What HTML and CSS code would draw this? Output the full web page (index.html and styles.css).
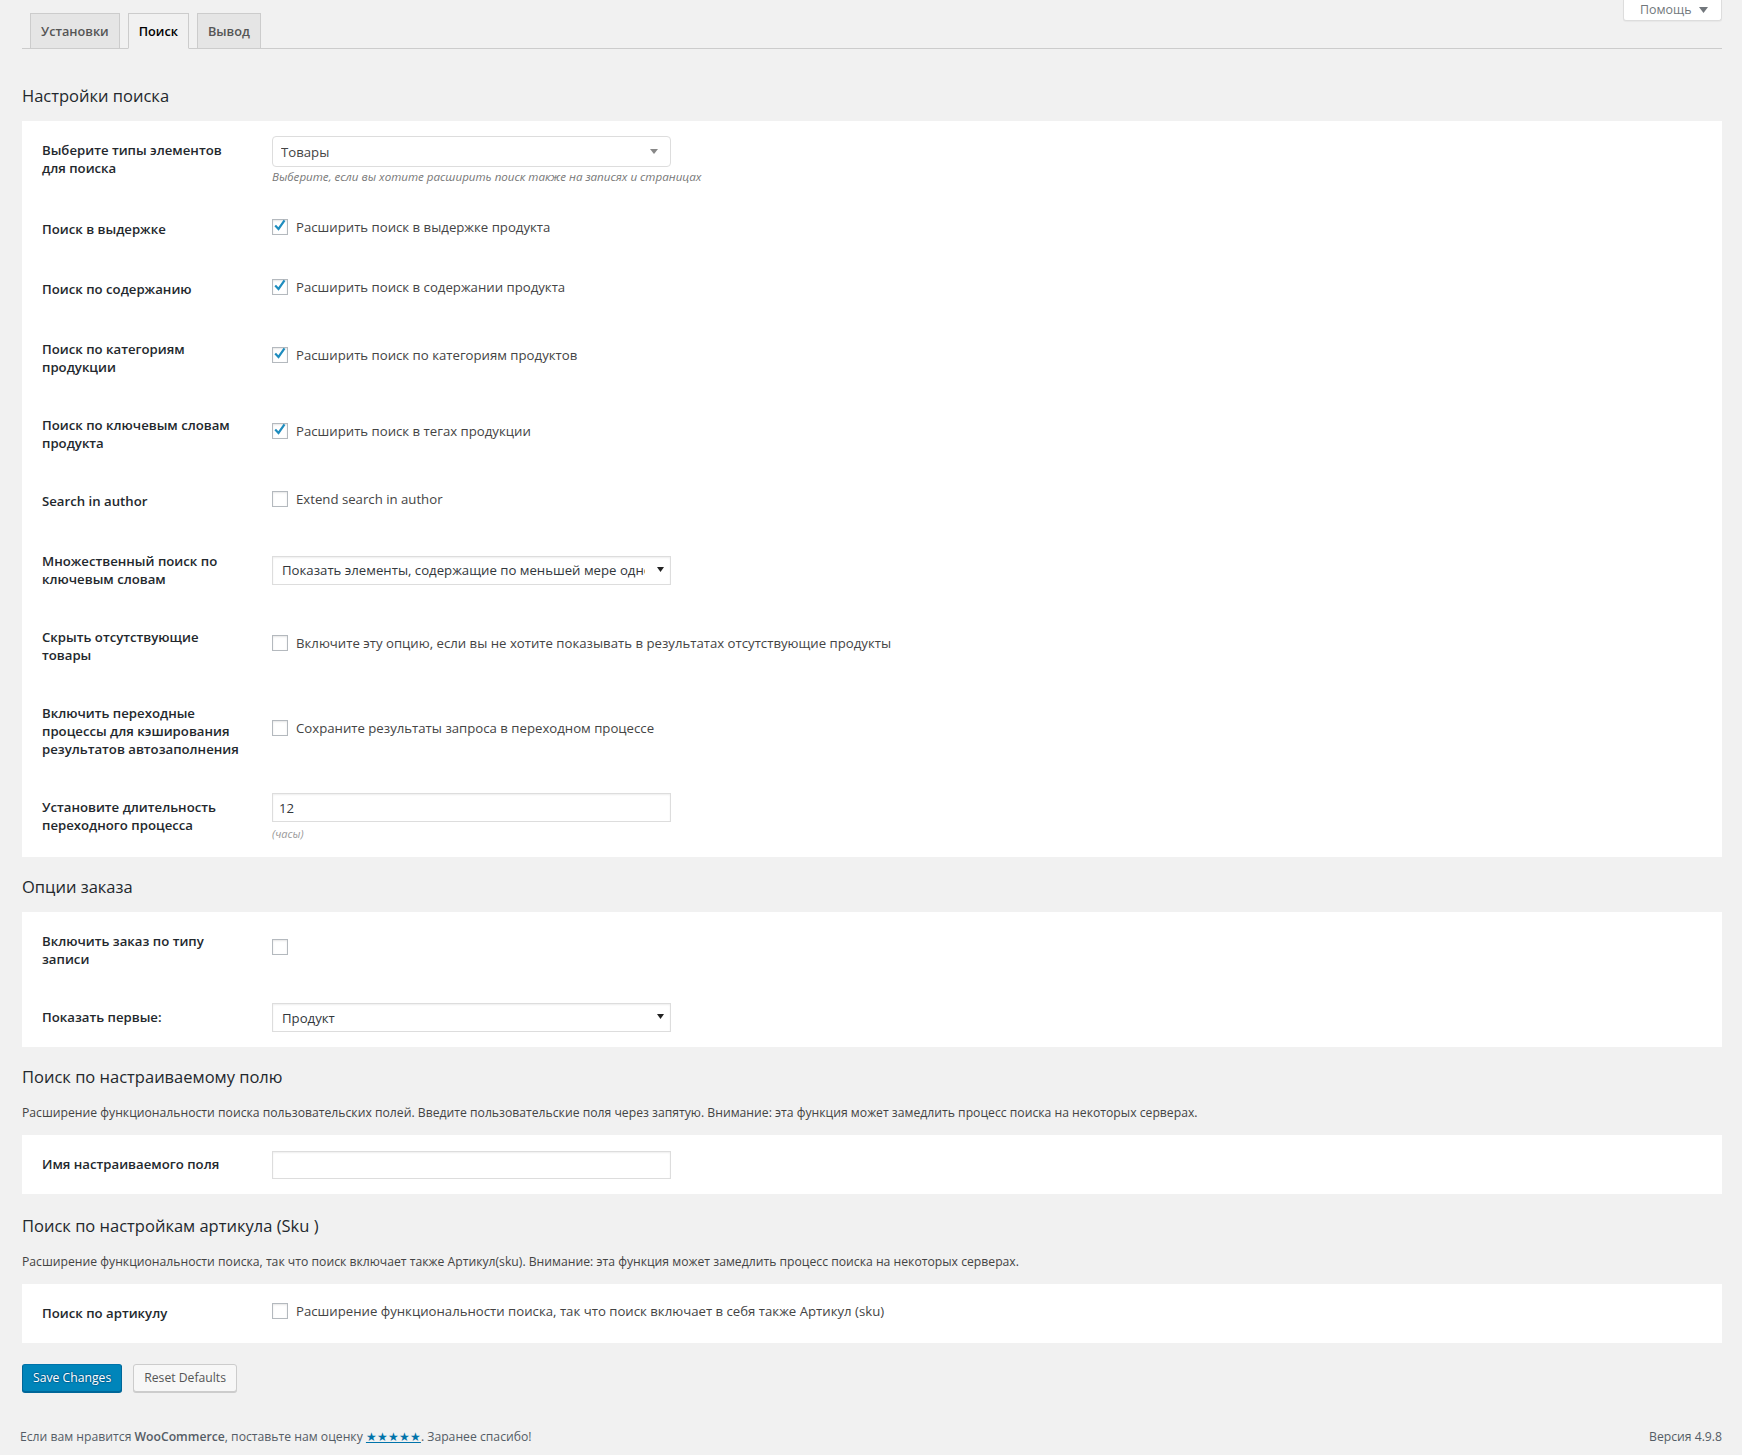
FILE: index.html
```html
<!DOCTYPE html>
<html lang="ru">
<head>
<meta charset="utf-8">
<title>Настройки поиска</title>
<link rel="stylesheet" href="styles.css">
</head>
<body>
<div class="wrap">
  <a class="help">Помощь <svg class="help-arrow" width="9" height="6" viewBox="0 0 9 6"><path d="M0 0h9L4.5 6z" fill="#72777c"/></svg></a>
  <nav class="tabs">
    <a class="tab">Установки</a>
    <a class="tab active">Поиск</a>
    <a class="tab">Вывод</a>
  </nav>

  <h2 class="section-title">Настройки поиска</h2>
  <div class="panel">
    <div class="row">
      <div class="th">Выберите типы элементов для поиска</div>
      <div class="td td-top">
        <div class="select2"><span class="sel-text">Товары</span><span class="s2-arrow"></span></div>
        <p class="desc">Выберите, если вы хотите расширить поиск также на записях и страницах</p>
      </div>
    </div>
    <div class="row">
      <div class="th">Поиск в выдержке</div>
      <div class="td td-check"><label class="check"><span class="cb"><svg viewBox="0 0 16 16" width="16" height="16"><path d="M3.2 7.6l3.3 3.4 6-8.6" fill="none" stroke="#1e8cbe" stroke-width="2.2"/></svg></span>Расширить поиск в выдержке продукта</label></div>
    </div>
    <div class="row">
      <div class="th">Поиск по содержанию</div>
      <div class="td td-check"><label class="check"><span class="cb"><svg viewBox="0 0 16 16" width="16" height="16"><path d="M3.2 7.6l3.3 3.4 6-8.6" fill="none" stroke="#1e8cbe" stroke-width="2.2"/></svg></span>Расширить поиск в содержании продукта</label></div>
    </div>
    <div class="row">
      <div class="th">Поиск по категориям продукции</div>
      <div class="td td-check"><label class="check"><span class="cb"><svg viewBox="0 0 16 16" width="16" height="16"><path d="M3.2 7.6l3.3 3.4 6-8.6" fill="none" stroke="#1e8cbe" stroke-width="2.2"/></svg></span>Расширить поиск по категориям продуктов</label></div>
    </div>
    <div class="row">
      <div class="th">Поиск по ключевым словам продукта</div>
      <div class="td td-check"><label class="check"><span class="cb"><svg viewBox="0 0 16 16" width="16" height="16"><path d="M3.2 7.6l3.3 3.4 6-8.6" fill="none" stroke="#1e8cbe" stroke-width="2.2"/></svg></span>Расширить поиск в тегах продукции</label></div>
    </div>
    <div class="row">
      <div class="th">Search in author</div>
      <div class="td td-check"><label class="check"><span class="cb"></span>Extend search in author</label></div>
    </div>
    <div class="row">
      <div class="th">Множественный поиск по ключевым словам</div>
      <div class="td">
        <div class="select"><span class="sel-text">Показать элементы, содержащие по меньшей мере одно ключевое слово</span><svg class="sel-arrow" width="7" height="5" viewBox="0 0 7 5"><path d="M0 0h7L3.5 5z" fill="#222"/></svg></div>
      </div>
    </div>
    <div class="row">
      <div class="th">Скрыть отсутствующие товары</div>
      <div class="td td-check"><label class="check"><span class="cb"></span>Включите эту опцию, если вы не хотите показывать в результатах отсутствующие продукты</label></div>
    </div>
    <div class="row">
      <div class="th">Включить переходные процессы для кэширования результатов автозаполнения</div>
      <div class="td td-check"><label class="check"><span class="cb"></span>Сохраните результаты запроса в переходном процессе</label></div>
    </div>
    <div class="row">
      <div class="th">Установите длительность переходного процесса</div>
      <div class="td td-top">
        <div class="input">12</div>
        <p class="desc desc-hours">(часы)</p>
      </div>
    </div>
  </div>

  <h2 class="section-title">Опции заказа</h2>
  <div class="panel">
    <div class="row">
      <div class="th">Включить заказ по типу записи</div>
      <div class="td td-check"><label class="check"><span class="cb"></span></label></div>
    </div>
    <div class="row">
      <div class="th">Показать первые:</div>
      <div class="td">
        <div class="select"><span class="sel-text">Продукт</span><svg class="sel-arrow" width="7" height="5" viewBox="0 0 7 5"><path d="M0 0h7L3.5 5z" fill="#222"/></svg></div>
      </div>
    </div>
  </div>

  <h2 class="section-title">Поиск по настраиваемому полю</h2>
  <p class="section-desc">Расширение функциональности поиска пользовательских полей. Введите пользовательские поля через запятую. Внимание: эта функция может замедлить процесс поиска на некоторых серверах.</p>
  <div class="panel">
    <div class="row row-single">
      <div class="th">Имя настраиваемого поля</div>
      <div class="td"><div class="input input-short"></div></div>
    </div>
  </div>

  <h2 class="section-title title-sku">Поиск по настройкам артикула (Sku )</h2>
  <p class="section-desc">Расширение функциональности поиска, так что поиск включает также Артикул(sku). Внимание: эта функция может замедлить процесс поиска на некоторых серверах.</p>
  <div class="panel">
    <div class="row row-single">
      <div class="th">Поиск по артикулу</div>
      <div class="td td-check td-check-short"><label class="check"><span class="cb"></span>Расширение функциональности поиска, так что поиск включает в себя также Артикул (sku)</label></div>
    </div>
  </div>

  <div class="actions">
    <button class="btn btn-primary">Save Changes</button>
    <button class="btn btn-secondary">Reset Defaults</button>
  </div>
</div>

<footer class="footer">
  <span>Если вам нравится <strong>WooCommerce</strong>, поставьте нам оценку <a class="stars">★★★★★</a>. Заранее спасибо!</span>
  <span>Версия 4.9.8</span>
</footer>
</body>
</html>
```

FILE: styles.css
```css
* {
  box-sizing: border-box;
}

html,
body {
  margin: 0;
  background: #f1f1f1;
}

body {
  font-family: "Open Sans", "Noto Sans", sans-serif;
  font-size: 12.2px;
  color: #444;
  min-height: 1455px;
}

.wrap {
  position: relative;
  padding: 0 20px 0 22px;
}

/* Help toggle */
.help {
  position: absolute;
  top: 0;
  right: 20px;
  width: 99px;
  height: 21px;
  display: flex;
  align-items: center;
  gap: 8px;
  padding-left: 16px;
  background: #fff;
  border: 1px solid #ddd;
  border-top: 0;
  border-radius: 0 0 3px 3px;
  box-shadow: 0 1px 1px rgba(0, 0, 0, 0.04);
  color: #72777c;
  font-size: 12.4px;
  line-height: 18px;
}

.help-arrow {
  margin-top: -1px;
}

/* Tabs */
.tabs {
  display: flex;
  gap: 8px;
  padding: 13px 0 0 8px;
  border-bottom: 1px solid #ccc;
  margin-bottom: 35px;
}

.tab {
  margin-bottom: -1px;
  padding: 5px 10px;
  font-size: 12.7px;
  line-height: 24px;
  font-weight: 600;
  color: #555;
  background: #e5e5e5;
  border: 1px solid #ccc;
}

.tab.active {
  color: #000;
  background: #f1f1f1;
  border-bottom-color: #f1f1f1;
}

/* Section headings */
.section-title {
  margin: 18px 0 13px;
  font-size: 16.5px;
  line-height: 24px;
  font-weight: 400;
  color: #23282d;
}

.title-sku {
  margin-top: 20px;
}

.section-desc {
  margin: 15px 0 13px;
  font-size: 12.2px;
  line-height: 18px;
  color: #444;
}

/* Panels / form rows */
.panel {
  background: #fff;
}

.row {
  display: grid;
  grid-template-columns: 240px 1fr;
}

.th {
  padding: 20px 20px;
  font-size: 13.2px;
  line-height: 18px;
  font-weight: 600;
  color: #23282d;
}

.td {
  padding: 15px 10px;
  display: flex;
  flex-direction: column;
  justify-content: center;
  font-size: 13.2px;
  line-height: 18px;
}

.td-top {
  justify-content: flex-start;
}

.td-check {
  min-height: 60px;
  padding-top: 12px;
  padding-bottom: 18px;
}

.td-check-short {
  min-height: 59px;
}

.row-single .th {
  padding-top: 20px;
  padding-bottom: 21px;
}

.check {
  display: flex;
  align-items: center;
  color: #444;
}

.cb {
  flex: none;
  width: 16px;
  height: 16px;
  margin: 0 8px 0 0;
  background: #fff;
  border: 1px solid #b4b9be;
  box-shadow: inset 0 1px 2px rgba(0, 0, 0, 0.1);
  position: relative;
}

.cb svg {
  position: absolute;
  left: -1px;
  top: -2px;
  overflow: visible;
}

/* Select2-like select */
.select2 {
  width: 399px;
  height: 31px;
  display: flex;
  align-items: center;
  justify-content: space-between;
  padding: 0 12px 0 8px;
  background: #fff;
  border: 1px solid #ddd;
  border-radius: 4px;
  color: #444;
  font-size: 13.2px;
}

.s2-arrow {
  width: 0;
  height: 0;
  border-style: solid;
  border-width: 5px 4px 0 4px;
  border-color: #888 transparent transparent transparent;
}

/* Native-looking select */
.select {
  width: 399px;
  height: 29px;
  display: flex;
  align-items: center;
  padding: 0 6px 0 9px;
  background: #fff;
  border: 1px solid #ddd;
  box-shadow: inset 0 1px 2px rgba(0, 0, 0, 0.07);
  color: #32373c;
  font-size: 13.2px;
}

.sel-text {
  flex: 1;
  overflow: hidden;
  white-space: nowrap;
  margin-right: 12px;
}

.sel-arrow {
  flex: none;
  margin-top: -2px;
}

.input {
  width: 399px;
  height: 29px;
  padding: 0 6px;
  display: flex;
  align-items: center;
  background: #fff;
  border: 1px solid #ddd;
  box-shadow: inset 0 1px 2px rgba(0, 0, 0, 0.07);
  color: #32373c;
  font-size: 13.2px;
}

.input-short {
  height: 28px;
}

.desc {
  margin: 2px 0 0;
  font-size: 11.6px;
  line-height: 16px;
  font-style: italic;
  color: #777;
}

.desc-hours {
  margin-top: 4px;
  font-size: 11px;
  color: #999;
}

/* Buttons */
.actions {
  display: flex;
  gap: 11px;
  margin-top: 21px;
}

.btn {
  height: 28px;
  padding: 0 10px 1px;
  font-family: inherit;
  font-size: 12.2px;
  line-height: 26px;
  border-radius: 3px;
  border: 1px solid;
}

.btn-primary {
  color: #fff;
  background: #0085ba;
  border-color: #0073aa #006799 #006799;
  box-shadow: 0 1px 0 #006799;
  text-shadow: 0 -1px 1px #006799, 1px 0 1px #006799, 0 1px 1px #006799, -1px 0 1px #006799;
}

.btn-secondary {
  color: #555;
  background: #f7f7f7;
  border-color: #ccc;
  box-shadow: 0 1px 0 #ccc;
}

/* Footer */
.footer {
  display: flex;
  justify-content: space-between;
  padding: 0 20px;
  margin-top: 36px;
  font-size: 12.2px;
  line-height: 18px;
  color: #555d66;
}

.footer strong {
  font-weight: 600;
}

.stars {
  color: #0073aa;
  text-decoration: underline;
}
```
